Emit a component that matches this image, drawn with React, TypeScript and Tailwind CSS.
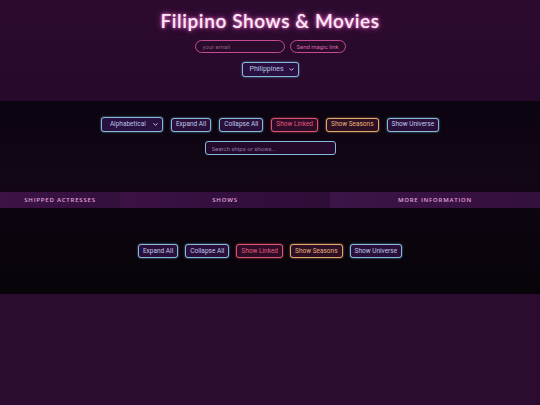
import { ChevronDown } from "lucide-react";

const btnBase =
  "h-[14px] px-[4px] rounded-[3px] border text-[6.5px] leading-none bg-[#2a0f3b] font-['Roboto',sans-serif]";

function ControlButton({ label, tone }: { label: string; tone: "blue" | "red" | "gold" }) {
  const tones = {
    blue: "border-[#86b9d6] text-[#bfc9ea] shadow-[0_0_2px_#5fa3c7]",
    red: "border-[#d9566f] text-[#e05c7c] bg-[#2e0b26] shadow-[0_0_2px_#c0405a]",
    gold: "border-[#e0a86a] text-[#e8b27c] bg-[#2e1024] shadow-[0_0_2px_#c08a50]",
  };
  return <button className={`${btnBase} ${tones[tone]}`}>{label}</button>;
}

export default function App() {
  return (
    <div className="min-h-[405px] bg-[#2b0b30] font-['Open_Sans',sans-serif]">
      {/* header */}
      <div className="h-[101px] bg-gradient-to-b from-[#2c0b2f] to-[#26092b] flex flex-col items-center pt-[9px]">
        <h1 className="text-[19px] leading-[24px] font-semibold tracking-[0.6px] text-[#fde9f6] [text-shadow:0_0_3px_#f77fd2,0_0_7px_#b8389a] font-['Lato',sans-serif]">
          Filipino Shows &amp; Movies
        </h1>
        <div className="flex gap-[5px] mt-[7px]">
          <input
            placeholder="your email"
            className="w-[90px] h-[13px] rounded-full border border-[#c44a93] bg-[#2a0b2b] px-[7px] text-[6px] text-[#d07ab0] placeholder:text-[#8d5a80] outline-none font-['Roboto',sans-serif]"
          />
          <button className="w-[56px] h-[13px] rounded-full border border-[#c44a93] bg-[#2a0b2b] text-[6px] text-[#d966a8] font-['Roboto',sans-serif]">
            Send magic link
          </button>
        </div>
        <div className="mt-[9px] w-[57px] h-[15px] rounded-[3px] border border-[#86b9d6] bg-[#2a1040] shadow-[0_0_2px_#5fa3c7] flex items-center justify-between pl-[7px] pr-[3px] text-[7px] text-[#b7c4e6] font-['Roboto',sans-serif]">
          <span>Philippines</span>
          <ChevronDown size={7} strokeWidth={3} className="text-[#d8dff5]" />
        </div>
      </div>

      {/* controls */}
      <div className="h-[85px] bg-gradient-to-b from-[#0c0410] to-[#130716] flex flex-col items-center pt-[16px]">
        <div className="flex gap-[8px] items-center">
          <div className="w-[62px] h-[15px] rounded-[3px] border border-[#86b9d6] bg-[#2a1040] shadow-[0_0_2px_#5fa3c7] flex items-center justify-between pl-[8px] pr-[3px] text-[6.5px] text-[#b7c4e6] font-['Roboto',sans-serif]">
            <span>Alphabetical</span>
            <ChevronDown size={7} strokeWidth={3} className="text-[#d8dff5]" />
          </div>
          <ControlButton label="Expand All" tone="blue" />
          <ControlButton label="Collapse All" tone="blue" />
          <ControlButton label="Show Linked" tone="red" />
          <ControlButton label="Show Seasons" tone="gold" />
          <ControlButton label="Show Universe" tone="blue" />
        </div>
        <input
          placeholder="Search ships or shows..."
          className="mt-[9px] w-[131px] h-[14px] rounded-[3px] border border-[#86b9d6] bg-[#25092d] px-[6px] text-[6px] text-[#c9b2d9] placeholder:text-[#8a7aa5] outline-none font-['Roboto',sans-serif]"
        />
      </div>
      <div className="h-[6px] bg-[#120615]" />

      {/* tabs */}
      <div className="flex h-[16px] text-[6px] font-semibold tracking-[0.8px] text-[#e0a3dc]">
        <div className="w-[120px] flex items-center justify-center bg-gradient-to-r from-[#3b1345] to-[#33103c]">
          SHIPPED ACTRESSES
        </div>
        <div className="w-[210px] flex items-center justify-center bg-gradient-to-r from-[#3a1244] to-[#2e0d37]">
          SHOWS
        </div>
        <div className="flex-1 flex items-center justify-center bg-gradient-to-r from-[#3c1447] to-[#34103d]">
          MORE INFORMATION
        </div>
      </div>

      {/* shows panel */}
      <div className="h-[86px] bg-gradient-to-b from-[#0d0510] to-[#080309] flex items-start justify-center pt-[36px]">
        <div className="flex gap-[7px]">
          <ControlButton label="Expand All" tone="blue" />
          <ControlButton label="Collapse All" tone="blue" />
          <ControlButton label="Show Linked" tone="red" />
          <ControlButton label="Show Seasons" tone="gold" />
          <ControlButton label="Show Universe" tone="blue" />
        </div>
      </div>
    </div>
  );
}
